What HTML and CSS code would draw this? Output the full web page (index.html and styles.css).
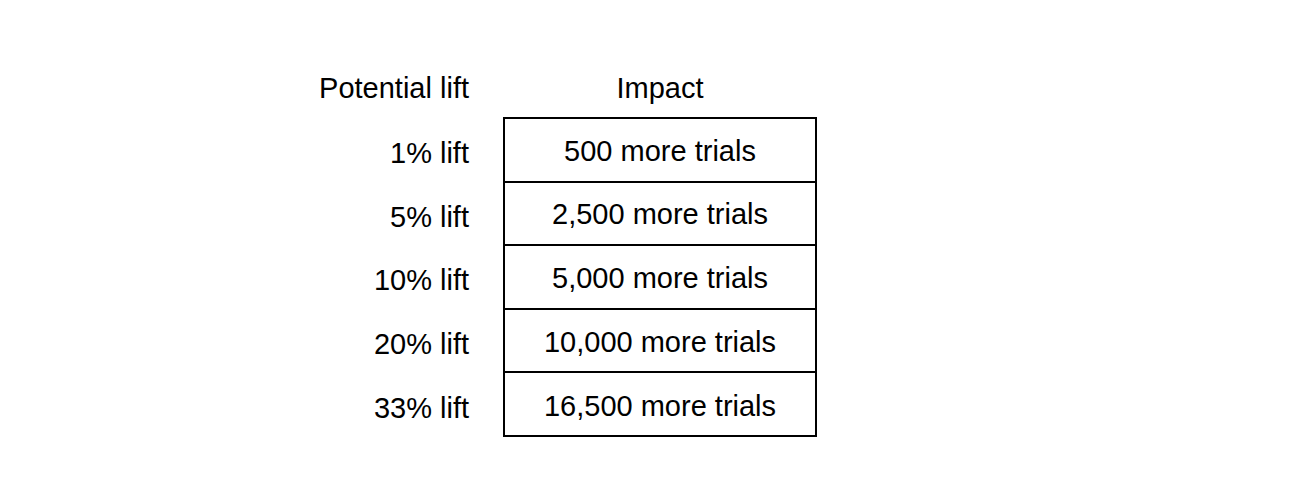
FILE: index.html
```html
<!DOCTYPE html>
<html>
<head>
<meta charset="utf-8">
<link rel="stylesheet" href="styles.css">
</head>
<body>
<div class="lift-table">
  <div class="labels">
    <div class="head">Potential lift</div>
    <div class="label-rows">
      <div class="label">1% lift</div>
      <div class="label">5% lift</div>
      <div class="label">10% lift</div>
      <div class="label">20% lift</div>
      <div class="label">33% lift</div>
    </div>
  </div>
  <div class="impact">
    <div class="head center">Impact</div>
    <div class="box">
      <div class="cell">500 more trials</div>
      <div class="cell">2,500 more trials</div>
      <div class="cell">5,000 more trials</div>
      <div class="cell">10,000 more trials</div>
      <div class="cell last">16,500 more trials</div>
    </div>
  </div>
</div>
</body>
</html>
```
FILE: styles.css
```css
html, body {
  margin: 0;
  padding: 0;
  background: #ffffff;
}
body {
  font-family: "Liberation Sans", Arial, Helvetica, sans-serif;
  font-size: 29px;
  color: #000000;
  width: 1316px;
  height: 478px;
  overflow: hidden;
}
.lift-table {
  display: flex;
  gap: 34px;
  padding-top: 53px;
  padding-left: 299px;
}
.labels {
  width: 170px;
  display: flex;
  flex-direction: column;
}
.head {
  height: 64px;
  display: flex;
  align-items: center;
  justify-content: flex-end;
  padding-top: 7px;
  box-sizing: border-box;
}
.head.center {
  justify-content: center;
}
.label-rows {
  padding-top: 5px;
  display: flex;
  flex-direction: column;
}
.label {
  height: 63.6px;
  display: flex;
  align-items: center;
  justify-content: flex-end;
}
.impact {
  width: 314px;
  display: flex;
  flex-direction: column;
}
.box {
  border: 2px solid #000000;
  display: flex;
  flex-direction: column;
}
.cell {
  height: 63.6px;
  box-sizing: border-box;
  border-bottom: 2px solid #000000;
  padding-top: 3px;
  display: flex;
  align-items: center;
  justify-content: center;
}
.cell.last {
  height: 61.6px;
  border-bottom: none;
  padding-top: 5px;
}
```
